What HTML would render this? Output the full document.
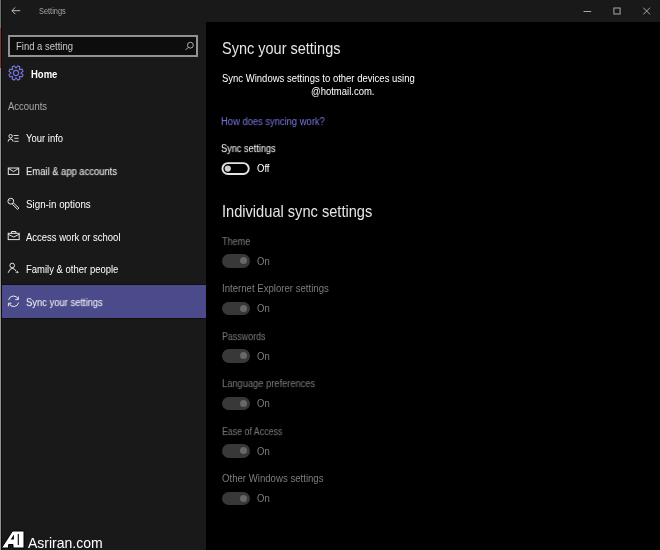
<!DOCTYPE html>
<html><head><meta charset="utf-8">
<style>
html,body{margin:0;padding:0;}
body{width:660px;height:550px;overflow:hidden;position:relative;background:#000;font-family:"Liberation Sans",sans-serif;}
.a{position:absolute;}
.t{position:absolute;line-height:1;white-space:nowrap;font-size:9.5px;color:#fff;transform-origin:0 85%;transform:scale(var(--sx,1),var(--sy,1.1));will-change:transform;}
#titlebar{left:0;top:0;width:660px;height:22px;background:#191919;}
#side{left:0;top:22px;width:206px;height:528px;background:#191919;}
#edge1{left:0;top:0;width:1px;height:28px;background:#72706a;}
#edge2{left:0;top:28px;width:1px;height:40px;background:#7c3b2e;}
#edge3{left:0;top:68px;width:1px;height:482px;background:#939393;}
#search{left:8px;top:35px;width:186px;height:18px;border:2px solid #929292;background:#0d0d0d;}
#sel{left:1px;top:285px;width:205px;height:33px;background:#4b4a8a;box-shadow:0 -1px 0 #0f0f0b,0 1px 0 #0f0f0b;}
.lbl{color:#7d7d7d;}
.on{color:#7e7e7e;}
.tg{position:absolute;left:221.5px;width:28px;height:13.5px;border-radius:7px;background:#383838;}
.tg::after{content:"";position:absolute;left:18px;top:3.3px;width:7px;height:7px;border-radius:50%;background:#686868;}
</style></head>
<body>
<div class="a" id="titlebar"></div>
<div class="a" id="side"></div>
<div class="a" id="sel"></div>
<div class="a" id="edge1"></div>
<div class="a" id="edge2"></div>
<div class="a" id="edge3"></div>
<div class="a" style="left:1px;top:0;width:1px;height:550px;background:#0c0c0c;"></div>

<!-- title bar -->
<svg class="a" style="left:0;top:0" width="660" height="22" viewBox="0 0 660 22">
  <g stroke="#bdbdbd" stroke-width="1" fill="none">
    <path d="M12 10.7 H20.2 M15.3 7.3 L11.9 10.7 L15.3 14.1"/>
  </g>
  <g stroke="#a8a8a8" stroke-width="1" fill="none">
    <path d="M583.5 11.5 H591.2"/>
    <rect x="613.9" y="8" width="6.2" height="6"/>
    <path d="M643.3 7.7 L650 14.4 M650 7.7 L643.3 14.4"/>
  </g>
</svg>
<div class="t" style="left:39.4px;top:7.9px;font-size:7.4px;color:#a4a4a4;">Settings</div>

<!-- search -->
<div class="a" id="search"></div>
<div class="t" style="left:15.9px;top:41.5px;color:#c8c8c8;">Find a setting</div>
<svg class="a" style="left:180px;top:38px" width="16" height="16" viewBox="180 38 16 16">
  <g stroke="#b0b0b0" stroke-width="1" fill="none">
    <circle cx="190.4" cy="45.2" r="2.9"/>
    <path d="M188.3 47.3 L185.6 50"/>
  </g>
</svg>

<!-- home -->
<svg class="a" style="left:6px;top:63px" width="20" height="20" viewBox="6 63 20 20">
  <g fill="none" stroke="#7775e0" stroke-width="1.1">
    <path d="M16.26 68.01 L17.59 65.98 L19.84 66.91 L19.34 69.28 L19.72 69.66 L22.09 69.16 L23.02 71.41 L20.99 72.74 L20.99 73.26 L23.02 74.59 L22.09 76.84 L19.72 76.34 L19.34 76.72 L19.84 79.09 L17.59 80.02 L16.26 77.99 L15.74 77.99 L14.41 80.02 L12.16 79.09 L12.66 76.72 L12.28 76.34 L9.91 76.84 L8.98 74.59 L11.01 73.26 L11.01 72.74 L8.98 71.41 L9.91 69.16 L12.28 69.66 L12.66 69.28 L12.16 66.91 L14.41 65.98 L15.74 68.01 Z"/>
    <circle cx="16" cy="73" r="2.6"/>
  </g>
</svg>
<div class="t" style="left:30.8px;top:69.5px;font-weight:bold;">Home</div>
<div class="t" style="left:8.3px;top:101.8px;color:#a9a9a9;">Accounts</div>

<!-- nav icons -->
<svg class="a" style="left:0;top:120px" width="30" height="200" viewBox="0 120 30 200">
  <g fill="none" stroke="#e6e6e6" stroke-width="1">
    <!-- your info -->
    <circle cx="10.6" cy="136.2" r="1.7"/>
    <path d="M8.1 141.6 A2.5 2.6 0 0 1 13.1 141.6"/>
    <path d="M13.6 135.5 H18.6 M14.3 138.3 H18.6 M14.3 141.3 H18.6" stroke-width="0.9"/>
    <!-- email -->
    <rect x="8.3" y="168" width="10.4" height="6.4"/>
    <path d="M8.3 168.3 L13.5 171.6 L18.7 168.3"/>
    <!-- key -->
    <circle cx="10.8" cy="201.2" r="2.9"/>
    <circle cx="10" cy="200.3" r="0.5" fill="#e6e6e6" stroke="none"/>
    <path d="M13.3 202.8 L18.9 208.1 L17.6 209.4 L12.2 204.1"/>
    <!-- briefcase -->
    <rect x="8.2" y="233.3" width="11" height="6.3"/>
    <path d="M11.5 233.3 V231.5 H15.9 V233.3 M8.2 234.3 L13.7 237 L19.2 234.3"/>
    <!-- family -->
    <circle cx="12.2" cy="265.5" r="2.3"/>
    <path d="M8.2 272.8 Q9.4 268.7 12.2 268.4 Q14.6 268.3 16.2 271.2"/>
    <path d="M15.6 272.2 H18.2 M17.2 271.2 L18.2 272.2 L17.2 273.2" stroke-width="0.9"/>
    <!-- sync -->
    <path d="M8.6 300 A5 5 0 0 1 18.2 299.3 M18.6 302.5 A5 5 0 0 1 9 303.3"/>
    <path d="M18.3 296.5 V299.6 H15.2 M8.4 306.3 V303.2 H11.5"/>
  </g>
</svg>
<div class="t" style="left:26.2px;top:134.4px;">Your info</div>
<div class="t" style="--sx:0.99;left:25.6px;top:167.2px;">Email &amp; app accounts</div>
<div class="t" style="--sx:1.03;left:25.5px;top:200px;">Sign-in options</div>
<div class="t" style="left:26.2px;top:232.7px;">Access work or school</div>
<div class="t" style="left:25.5px;top:265.4px;">Family &amp; other people</div>
<div class="t" style="--sx:0.99;left:25.5px;top:298.1px;">Sync your settings</div>

<!-- watermark -->
<svg class="a" style="left:0;top:528px" width="30" height="22" viewBox="0 528 30 22">
  <path d="M1.5 548 L12.5 531 H24 V548 H13 V544.5 H8.6 V548 Z" fill="#fff" stroke="#000" stroke-width="1"/>
  <path d="M10.7 539.4 L13.9 534.4 V539.4 Z" fill="#000"/>
  <path d="M18.3 534 V545" stroke="#000" stroke-width="1.1"/>
</svg>
<div class="t" style="left:28.3px;top:535.6px;font-size:14px;">Asriran.com</div>

<!-- main -->
<div class="t" style="--sy:1.08;left:222px;top:41.6px;font-size:14.5px;color:#e6e6e6;">Sync your settings</div>
<div class="t" style="left:222px;top:73.7px;">Sync Windows settings to other devices using</div>
<div class="t" style="left:310.8px;top:86.9px;">@hotmail.com.</div>
<div class="t" style="--sx:0.987;left:221.4px;top:116.5px;color:#7a78e4;">How does syncing work?</div>
<div class="t" style="--sx:0.967;left:221px;top:144px;">Sync settings</div>
<svg class="a" style="left:220px;top:160px" width="32" height="17" viewBox="220 160 32 17"><rect x="222.45" y="163.15" width="26.3" height="10.8" rx="5.4" fill="none" stroke="#e4e4e4" stroke-width="1.9"/><circle cx="227.8" cy="168.55" r="3.1" fill="#cdcdcd"/></svg>
<div class="t" style="left:257.1px;top:164.3px;">Off</div>

<div class="t" style="--sx:1.008;--sy:1.08;left:222.2px;top:205.4px;font-size:14.5px;color:#e6e6e6;">Individual sync settings</div>

<div class="t lbl" style="--sx:0.96;left:221.7px;top:236.5px;">Theme</div>
<div class="tg" style="top:254px;"></div>
<div class="t on" style="left:256.9px;top:256.7px;">On</div>

<div class="t lbl" style="--sx:1.011;left:221.6px;top:284px;">Internet Explorer settings</div>
<div class="tg" style="top:301.6px;"></div>
<div class="t on" style="left:256.9px;top:304.2px;">On</div>

<div class="t lbl" style="--sx:0.935;left:221.6px;top:331.5px;">Passwords</div>
<div class="tg" style="top:349.1px;"></div>
<div class="t on" style="left:256.9px;top:351.7px;">On</div>

<div class="t lbl" style="--sx:0.98;left:221.6px;top:379px;">Language preferences</div>
<div class="tg" style="top:396.7px;"></div>
<div class="t on" style="left:256.9px;top:399.2px;">On</div>

<div class="t lbl" style="--sx:0.928;left:221.5px;top:426.5px;">Ease of Access</div>
<div class="tg" style="top:444.2px;"></div>
<div class="t on" style="left:256.9px;top:446.7px;">On</div>

<div class="t lbl" style="--sx:1.012;left:221.6px;top:474px;">Other Windows settings</div>
<div class="tg" style="top:491.8px;"></div>
<div class="t on" style="left:256.9px;top:494.2px;">On</div>
</body></html>
